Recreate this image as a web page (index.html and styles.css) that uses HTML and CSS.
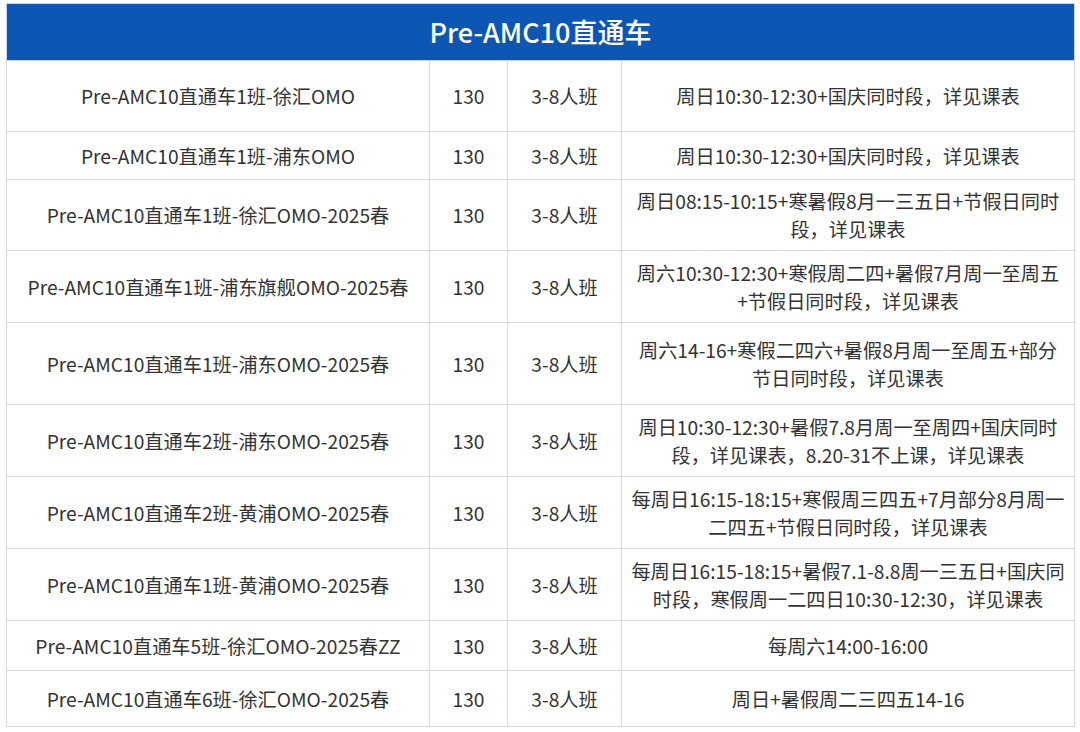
FILE: index.html
```html
<!DOCTYPE html>
<html lang="zh-CN">
<head>
<meta charset="utf-8">
<title>Pre-AMC10直通车</title>
<link rel="stylesheet" href="styles.css">
</head>
<body>
<table class="course-table">
  <colgroup>
    <col class="c-name">
    <col class="c-price">
    <col class="c-size">
    <col class="c-time">
  </colgroup>
  <thead>
    <tr class="h57"><th colspan="4">Pre-AMC10直通车</th></tr>
  </thead>
  <tbody>
    <tr class="h71"><td>Pre-AMC10直通车1班-徐汇OMO</td><td>130</td><td>3-8人班</td><td>周日10:30-12:30+国庆同时段，详见课表</td></tr>
    <tr class="h48"><td>Pre-AMC10直通车1班-浦东OMO</td><td>130</td><td>3-8人班</td><td>周日10:30-12:30+国庆同时段，详见课表</td></tr>
    <tr class="h71"><td>Pre-AMC10直通车1班-徐汇OMO-2025春</td><td>130</td><td>3-8人班</td><td>周日08:15-10:15+寒暑假8月一三五日+节假日同时段，详见课表</td></tr>
    <tr class="h72"><td>Pre-AMC10直通车1班-浦东旗舰OMO-2025春</td><td>130</td><td>3-8人班</td><td>周六10:30-12:30+寒假周二四+暑假7月周一至周五+节假日同时段，详见课表</td></tr>
    <tr class="h82"><td>Pre-AMC10直通车1班-浦东OMO-2025春</td><td>130</td><td>3-8人班</td><td>周六14-16+寒假二四六+暑假8月周一至周五+部分节日同时段，详见课表</td></tr>
    <tr class="h72"><td>Pre-AMC10直通车2班-浦东OMO-2025春</td><td>130</td><td>3-8人班</td><td>周日10:30-12:30+暑假7.8月周一至周四+国庆同时段，详见课表，8.20-31不上课，详见课表</td></tr>
    <tr class="h72"><td>Pre-AMC10直通车2班-黄浦OMO-2025春</td><td>130</td><td>3-8人班</td><td>每周日16:15-18:15+寒假周三四五+7月部分8月周一二四五+节假日同时段，详见课表</td></tr>
    <tr class="h72"><td>Pre-AMC10直通车1班-黄浦OMO-2025春</td><td>130</td><td>3-8人班</td><td>每周日16:15-18:15+暑假7.1-8.8周一三五日+国庆同时段，寒假周一二四日10:30-12:30，详见课表</td></tr>
    <tr class="h50"><td>Pre-AMC10直通车5班-徐汇OMO-2025春ZZ</td><td>130</td><td>3-8人班</td><td>每周六14:00-16:00</td></tr>
    <tr class="h56"><td>Pre-AMC10直通车6班-徐汇OMO-2025春</td><td>130</td><td>3-8人班</td><td>周日+暑假周二三四五14-16</td></tr>
  </tbody>
</table>
</body>
</html>
```
FILE: styles.css
```css
html, body {
  margin: 0;
  padding: 0;
  background: #ffffff;
}
body {
  padding: 3px 0 0 6px;
  font-family: "Noto Sans CJK SC", "Noto Sans", sans-serif;
}
.course-table {
  width: 1068px;
  border-collapse: collapse;
  table-layout: fixed;
  color: #333333;
  font-size: 19.2px;
  line-height: 28px;
}
.c-name { width: 423px; }
.c-price { width: 78px; }
.c-size { width: 114px; }
.c-time { width: 453px; }
.course-table th {
  background: #0d56b4;
  color: #ffffff;
  font-size: 27px;
  font-weight: 500;
  text-align: center;
  padding: 0;
  border: 1px solid #c9d3e6;
}
.course-table td {
  border: 1px solid #dadade;
  text-align: center;
  vertical-align: middle;
  padding: 0 8px;
}
.h57 { height: 57px; }
.h71 { height: 71px; }
.h48 { height: 48px; }
.h72 { height: 72px; }
.h82 { height: 82px; }
.h50 { height: 50px; }
.h56 { height: 56px; }
```
